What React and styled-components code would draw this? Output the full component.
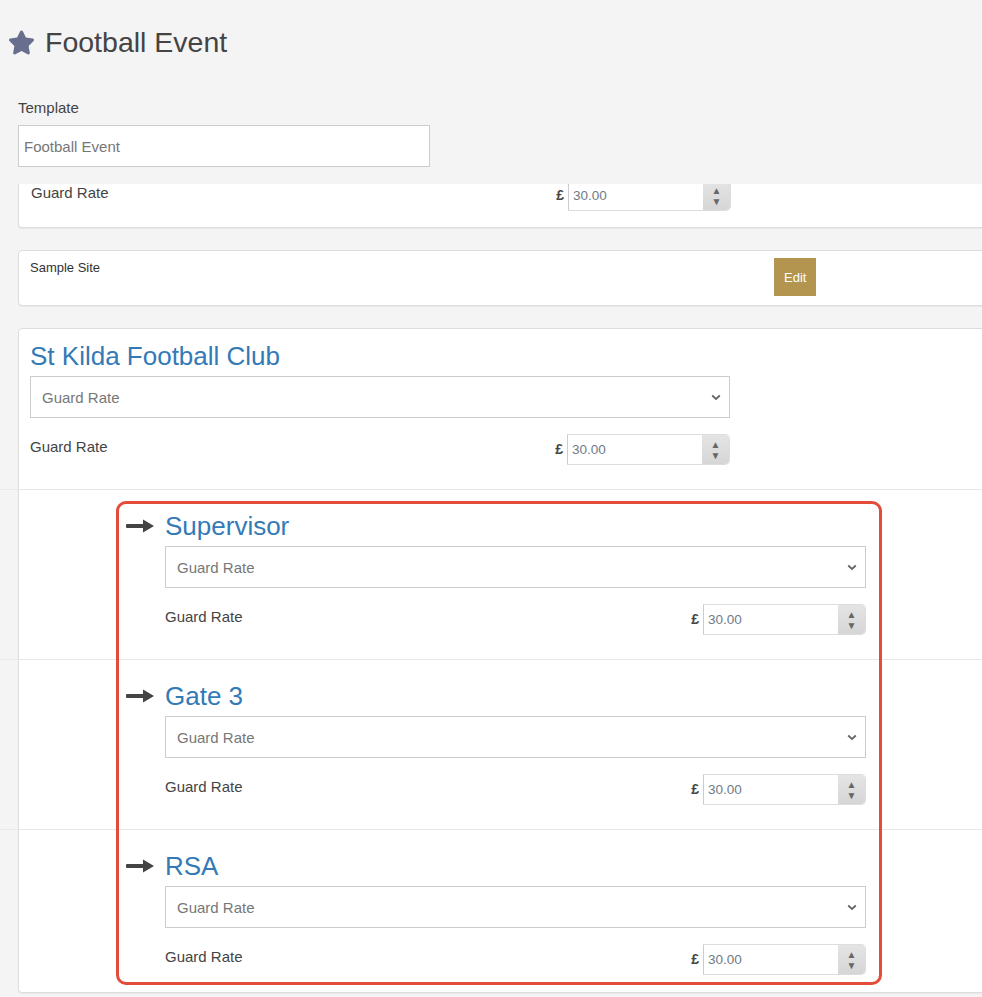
import React from 'react';
import styled, { createGlobalStyle } from 'styled-components';
import { FaStar } from 'react-icons/fa';

const subRows = ['Supervisor', 'Gate 3', 'RSA'];

const Chevron = () => (
  <svg width="10" height="7" viewBox="0 0 10 7">
    <polyline points="1.2,1.5 5,5 8.8,1.5" fill="none" stroke="#666" strokeWidth="1.8" />
  </svg>
);

const LongArrow = () => (
  <svg width="28" height="14" viewBox="0 0 28 14">
    <rect x="0" y="5" width="19" height="4" rx="1" fill="#444" />
    <polygon points="17,0.5 28,7 17,13.5" fill="#444" />
  </svg>
);

const RateField = ({ label = 'Guard Rate', value = '30.00' }) => (
  <RateRow>
    <RateLabel>{label}</RateLabel>
    <Currency>£</Currency>
    <NumberBox>
      <NumberValue>{value}</NumberValue>
      <Spinner>
        <span>▲</span>
        <span>▼</span>
      </Spinner>
    </NumberBox>
  </RateRow>
);

const App = () => {
  return (
    <Page>
      <GlobalStyle />
      <Header>
        <FaStar size={27} color="#686f8e" />
        <PageTitle>Football Event</PageTitle>
      </Header>

      <Form>
        <FieldLabel>Template</FieldLabel>
        <TextInput defaultValue="Football Event" readOnly />

        <ClippedCard>
          <ShiftedRow>
            <RateField />
          </ShiftedRow>
        </ClippedCard>

        <Card $gap={22}>
          <SiteRow>
            <SiteName>Sample Site</SiteName>
            <EditButton>Edit</EditButton>
          </SiteRow>
        </Card>

        <Card $gap={22}>
          <TopBlock>
            <SectionTitle>St Kilda Football Club</SectionTitle>
            <SelectBox>
              <span>Guard Rate</span>
              <Chevron />
            </SelectBox>
            <RateField />
          </TopBlock>

          <SubRows>
            {subRows.map((name) => (
              <SubRow key={name}>
                <ArrowCol>
                  <LongArrow />
                </ArrowCol>
                <SubContent>
                  <SectionTitle>{name}</SectionTitle>
                  <SelectBox>
                    <span>Guard Rate</span>
                    <Chevron />
                  </SelectBox>
                  <RateField />
                </SubContent>
              </SubRow>
            ))}
            <Highlight />
          </SubRows>
        </Card>
      </Form>
    </Page>
  );
};

export default App;

//----- Styled Components------
const GlobalStyle = createGlobalStyle`
  html, body {
    margin: 0;
    padding: 0;
    background: #f4f4f4;
    overflow: hidden;
  }
  body {
    font-family: "Liberation Sans", Arial, sans-serif;
    color: #333;
  }
`;

const Page = styled.div`
  width: 100%;
  min-height: 997px;
  padding-top: 22px;
  box-sizing: border-box;
`;

const Header = styled.div`
  display: flex;
  align-items: center;
  gap: 10px;
  height: 40px;
  padding-left: 8px;
`;

const PageTitle = styled.h1`
  margin: 0;
  font-size: 28.5px;
  font-weight: 400;
  color: #444;
`;

const Form = styled.div`
  margin-top: 36px;
  padding-left: 18px;
`;

const FieldLabel = styled.div`
  font-size: 15px;
  line-height: 20px;
  color: #444;
`;

const TextInput = styled.input`
  display: block;
  width: 412px;
  height: 42px;
  margin-top: 7px;
  box-sizing: border-box;
  border: 1px solid #ccc;
  background: #fff;
  padding: 0 5px;
  font-family: inherit;
  font-size: 15px;
  color: #777;
  outline: none;
`;

const Card = styled.div`
  position: relative;
  margin-top: ${(p) => p.$gap}px;
  margin-right: -40px;
  background: #fff;
  border: 1px solid #ddd;
  border-radius: 4px;
  box-shadow: 0 1px 1px rgba(0, 0, 0, 0.05);
`;

const ClippedCard = styled.div`
  margin-top: 17px;
  margin-right: -40px;
  padding: 0 12px 16px 12px;
  background: #fff;
  border: 1px solid #ddd;
  border-top: none;
  border-radius: 0 0 4px 4px;
  box-shadow: 0 1px 1px rgba(0, 0, 0, 0.05);
  overflow: hidden;
`;

const ShiftedRow = styled.div`
  margin-top: -4px;
`;

const RateRow = styled.div`
  display: flex;
  align-items: flex-start;
  width: 700px;
  height: 31px;
`;

const RateLabel = styled.div`
  flex: 1;
  font-size: 15px;
  line-height: 25px;
  color: #444;
`;

const Currency = styled.div`
  font-size: 14px;
  font-weight: bold;
  line-height: 31px;
  color: #444;
  margin-right: 4px;
`;

const NumberBox = styled.div`
  display: flex;
  width: 163px;
  height: 31px;
  box-sizing: border-box;
  border: 1px solid #ddd;
  border-left-color: #ccc;
  border-radius: 0 5px 5px 0;
  overflow: hidden;
  background: #fff;
`;

const NumberValue = styled.div`
  flex: 1;
  padding-left: 4px;
  font-size: 13.5px;
  line-height: 29px;
  color: #707a88;
`;

const Spinner = styled.div`
  width: 27px;
  display: flex;
  flex-direction: column;
  align-items: center;
  justify-content: center;
  background: linear-gradient(#e4e4e4, #d6d6d6);
  color: #666;
  font-size: 10px;
  line-height: 11px;
`;

const SiteRow = styled.div`
  display: flex;
  align-items: flex-start;
  padding: 7px 12px 9px 11px;
`;

const SiteName = styled.div`
  width: 744px;
  font-size: 13px;
  line-height: 19px;
  color: #333;
`;

const EditButton = styled.button`
  height: 38px;
  padding: 0 10px;
  border: none;
  border-radius: 0;
  background: #b3954f;
  color: #fff;
  font-family: inherit;
  font-size: 13px;
  cursor: pointer;
`;

const TopBlock = styled.div`
  padding: 12px 12px 24px 11px;
`;

const SectionTitle = styled.h2`
  margin: 0 0 5px;
  font-size: 26px;
  line-height: 30px;
  font-weight: 400;
  color: #337ab7;
`;

const SelectBox = styled.div`
  display: flex;
  align-items: center;
  justify-content: space-between;
  width: 700px;
  height: 42px;
  margin-bottom: 16px;
  box-sizing: border-box;
  padding: 0 8px 0 11px;
  border: 1px solid #ccc;
  background: #fff;
  font-size: 15px;
  color: #777;
`;

const SubRows = styled.div`
  position: relative;
  margin-left: -19px;
`;

const SubRow = styled.div`
  display: flex;
  gap: 11px;
  padding: 21px 0 24px 126px;
  border-top: 1px solid #e8e8e8;

  &:nth-last-child(2) {
    padding-bottom: 17px;
  }
`;

const ArrowCol = styled.div`
  width: 28px;
  height: 30px;
  display: flex;
  align-items: center;
`;

const SubContent = styled.div`
  width: 701px;

  & > div {
    width: 701px;
  }
`;

// annotation overlay drawn over the sub rows
const Highlight = styled.div`
  position: absolute;
  top: 12px;
  left: 116px;
  width: 766px;
  height: 484px;
  box-sizing: border-box;
  border: 3px solid #e44c3a;
  border-radius: 10px;
  pointer-events: none;
`;
